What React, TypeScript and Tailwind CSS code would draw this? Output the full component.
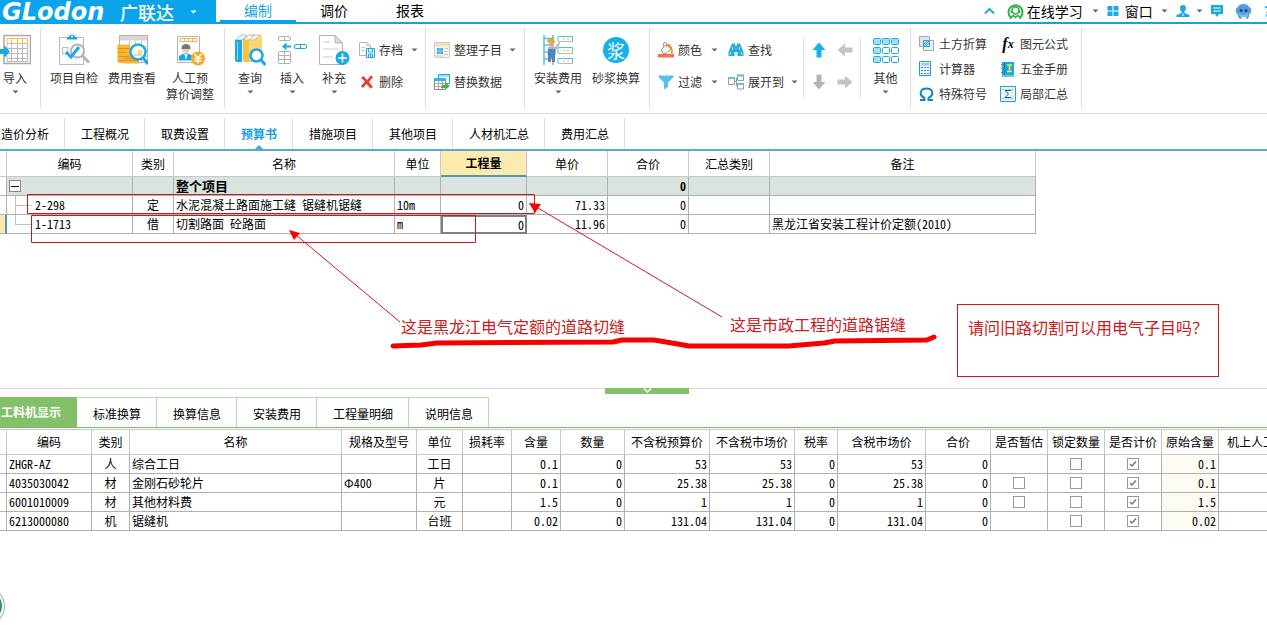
import type { ReactNode } from "react";

const BLUE = "#1ba9e6";
const GRAY = "#b4b4b4";

function Svg({ w = 16, h = 16, children }: { w?: number; h?: number; children: ReactNode }) {
  return (
    <svg className="block shrink-0" width={w} height={h} viewBox={`0 0 ${w} ${h}`} fill="none" aria-hidden="true">
      {children}
    </svg>
  );
}

function Caret({ color = "#666" }: { color?: string }) {
  return (
    <Svg w={7} h={4}>
      <path d="M0.5 0.5H6.5L3.5 3.5Z" fill={color} />
    </Svg>
  );
}

/* large ribbon icons */

function ImportIcon() {
  return (
    <Svg w={32} h={32}>
      <path d="M5 1.5H31.500V29.500H5Z" fill="#fff" stroke="#a9a9a9" strokeWidth="1.5" />
      <path d="M8 4.500H28.500V9.500H8Z" stroke="#f3bd55" />
      <path d="M12.500 4V10M18.500 4V10M23.500 4V10" stroke="#f3bd55" />
      <path d="M8 14.500H28.500M8 19.500H28.500M8 24.500H28.500M8 10V27.500H28.500V10M12.500 10V27M18.500 10V27M23.500 10V27" stroke="#b9b9b9" />
      <path d="M0 15H5V11L11 17.500L5 24V20H0Z" fill={BLUE} />
    </Svg>
  );
}

function CheckItemIcon() {
  return (
    <Svg w={32} h={32}>
      <path d="M1.500 3.500H25.500V30.500H1.500Z" fill="#fff" stroke="#b9b9b9" />
      <path d="M9 5.500V3H11A3 2.500 0 0 1 17 3H19V5.500Z" fill={BLUE} />
      <circle cx="14" cy="2.500" r="1" fill="#fff" />
      <path d="M4.500 13.500H10V20H4.500Z" stroke="#b9b9b9" />
      <circle cx="19.500" cy="17" r="6.500" fill="#fff" stroke="#b4b4b4" strokeWidth="2" />
      <path d="M24.500 22L31 28.500" stroke="#b4b4b4" strokeWidth="3" />
      <path d="M8 18L13 23L21 13" stroke={BLUE} strokeWidth="3" />
    </Svg>
  );
}

function FeeViewIcon() {
  return (
    <Svg w={32} h={32}>
      <path d="M3.500 1.500H31.500V28.500H3.500Z" fill="#fff" stroke="#b4b4b4" />
      <path d="M4 2H31V6.500H4Z" fill="#d6d6d6" />
      <path d="M13.500 7V28M19.500 7V28M25.500 7V28M4 12.500H31M4 17.500H31M4 22.500H31" stroke="#c6c6c6" />
      <path d="M1.500 10.500H14V28.500H1.500Z" fill="#fbb334" />
      <path d="M8 19H23V29.500H8Z" fill="#fbb334" />
      <path d="M1.500 14.500H13M1.500 18.500H11M1.500 22.500H14M2 26.500H22M8 24.500H21" stroke="#e5931a" />
      <circle cx="22" cy="18" r="7.500" fill="#fff" stroke={BLUE} strokeWidth="2.500" />
      <path d="M17 20H22V16H26V22H18Z" fill="#f9d79b" />
      <path d="M27 23.500L32 30" stroke={BLUE} strokeWidth="3" />
    </Svg>
  );
}

function LaborPriceIcon() {
  return (
    <Svg w={32} h={32}>
      <path d="M3.500 2.500H25.500V28.500H3.500Z" fill="#fff" stroke="#b4b4b4" />
      <path d="M6 4.500H23V7.500H6ZM10.500 4.500V7.500M14.500 4.500V7.500M18.500 4.500V7.500" stroke="#f0b650" />
      <circle cx="12" cy="15" r="3.800" fill="#e9c9a8" />
      <path d="M7.500 14A4.500 4 0 0 1 16.500 14V15H7.500Z" fill="#777" />
      <path d="M5 26.500V22Q12 16.500 19 22V26.500Z" fill={BLUE} />
      <path d="M10.500 20L12 26L13.500 20Z" fill="#fff" />
      <circle cx="24" cy="24.500" r="7" fill="#f9a825" />
      <path d="M20.500 20L24 24L27.500 20M24 24V29.500M20.500 24.500H27.500M20.500 27H27.500" stroke="#fff" strokeWidth="1.500" />
    </Svg>
  );
}

function QueryIcon() {
  return (
    <Svg w={32} h={32}>
      <path d="M1 6L7 1H13L8 6Z" fill="#e9f7fd" stroke="#9ccfe4" />
      <path d="M1 6H8V28H3Q1 28 1 26Z" fill={BLUE} />
      <path d="M3.500 8V26" stroke="#8fdcf8" />
      <path d="M9 6L15 1H21L15 6Z" fill="#fff" stroke="#b8b08f" />
      <path d="M9 6H15V28H11Q9 28 9 26Z" fill="#f2c243" />
      <path d="M15 6L21 1H28V24L22 28H15Z" fill="#fbd675" />
      <path d="M15 6L21 1H26L20 6Z" fill="#fff" stroke="#cdbd86" />
      <circle cx="22.500" cy="21.500" r="6" fill="#fff" stroke={BLUE} strokeWidth="2.500" />
      <path d="M27 26L31.500 31" stroke={BLUE} strokeWidth="3" />
    </Svg>
  );
}

function InsertIcon() {
  return (
    <Svg w={32} h={32}>
      <rect x="2.500" y="2.500" width="12" height="4" rx="1.500" stroke="#b0b0b0" />
      <path d="M8.500 2.500V6.500" stroke="#b0b0b0" />
      <rect x="2.500" y="17.500" width="12" height="12" rx="1.500" stroke="#b0b0b0" />
      <path d="M8.500 17.500V29.500M2.500 21.500H14.500M2.500 25.500H14.500" stroke="#b0b0b0" />
      <path d="M6 12.500L10.500 8.500V11.500H15V13.500H10.500V16.500Z" fill={BLUE} />
      <rect x="18.500" y="10.500" width="12" height="4" rx="1.500" stroke={BLUE} />
      <path d="M24.500 10.500V14.500" stroke={BLUE} />
    </Svg>
  );
}

function SupplementIcon() {
  return (
    <Svg w={32} h={32}>
      <path d="M1.500 1.500H17L24.500 9V30.500H1.500Z" fill="#fff" stroke="#b4b4b4" />
      <path d="M17 1.500V9H24.500Z" fill="#dcdcdc" stroke="#b4b4b4" />
      <path d="M5 8H12M5 15H20M5 23H15" stroke="#ccc" />
      <circle cx="24.500" cy="24" r="7" fill={BLUE} />
      <path d="M24.500 19.500V28.500M20 24H29" stroke="#fff" strokeWidth="1.500" />
    </Svg>
  );
}

function InstallFeeIcon() {
  return (
    <Svg w={32} h={32}>
      <path d="M2 1V31M11 1V31M2 4.500H11M2 11H11M2 18H11M2 25H11" stroke="#4cc3ea" strokeWidth="1.500" />
      <path d="M16 2.500H30.500V7.500H16ZM16 13.500H30.500V19.500H16ZM16 24.500H30.500V29.500H16Z" fill="#fff" stroke="#53bfe3" />
      <path d="M16 7.500H30.500M16 19.500H30.500M16 29.500H30.500" stroke="#bbb" />
      <path d="M21 5H23M25 5H27M21 16.500H23M25 16.500H27M21 27H23M25 27H27" stroke="#efb63d" />
      <path d="M5 8.500A4 4 0 0 1 13 8.500Z" fill="#f7a12c" />
      <circle cx="9" cy="10.500" r="2.500" fill="#dda97f" />
      <path d="M6 13H13L17 8L18.500 9L14 16V21H5Z" fill="#c2b5ae" />
      <path d="M6 15H13V24H6Z" fill="#4187cf" />
      <path d="M6 23H9V28H6ZM10 23H13V28H10Z" fill="#6f7d92" />
    </Svg>
  );
}

function MortarIcon() {
  return (
    <span className="flex h-8 items-center">
      <span className="flex size-[26px] items-center justify-center rounded-full bg-[#14b1ee] text-lg leading-none text-white">浆</span>
    </span>
  );
}

function OtherIcon() {
  const cells = [0, 1, 2, 3, 4, 5, 6, 7, 8];
  return (
    <Svg w={32} h={32}>
      {cells.map((i) => (
        <rect
          key={i}
          x={3.5 + (i % 3) * 9}
          y={4.5 + Math.floor(i / 3) * 9}
          width="7"
          height="6"
          rx="1"
          fill={i < 3 || i % 3 === 0 ? "#a9def5" : "#fff"}
          stroke={BLUE}
        />
      ))}
    </Svg>
  );
}

/* small ribbon icons */

function ArchiveIcon() {
  return (
    <Svg>
      <path d="M0.500 0.500H8L11.500 4V13.500H0.500Z" fill="#fff" stroke="#b4b4b4" />
      <path d="M8 0.500V4H11.500M2.500 5.500H6M2.500 8.500H6" stroke="#c4c4c4" />
      <path d="M7.500 6.500H15.500V15.500H7.500Z" fill="#fff" stroke={BLUE} />
      <path d="M9.500 7V10H13.500V7M9.500 15V12H13.500V15M11.500 12V15" stroke={BLUE} />
    </Svg>
  );
}

function DeleteIcon() {
  return (
    <Svg>
      <path d="M2 4L4.500 2L8 6L12 1.500L14 3L10 8L14 13L11.500 14.500L7.500 10L4 14L2 12L6 7.500Z" fill="#ec3b34" />
    </Svg>
  );
}

function ArrangeIcon() {
  return (
    <Svg>
      <path d="M0.500 0.500H15.500V15.500H0.500Z" fill="#f5f3ee" stroke="#ccc" />
      <path d="M1 1H15V4H1Z" fill="#f6e0b5" />
      <path d="M3 6H9V12H3Z" fill="#3badea" />
      <path d="M3 9H9M6 6V12" stroke="#8bd2f5" />
      <path d="M10.500 6.500H14M10.500 9.500H14M10.500 12.500H14M2 14H9" stroke="#c8c8c8" />
    </Svg>
  );
}

function ReplaceIcon() {
  return (
    <Svg>
      <path d="M4.500 0.500H15.500V9.500H4.500Z" fill="#fff" stroke="#2b9fd2" />
      <path d="M5 1H15V3H5Z" fill="#9fe0f4" />
      <path d="M0.500 4.500H11.500V15.500H0.500Z" fill="#fff" stroke="#888" />
      <path d="M0 4H12V7H0Z" fill="#35b3e2" />
      <path d="M4.500 7V15M8.500 7V15M1 9.500H11M1 12.500H11" stroke="#aaa" />
      <path d="M8 11H11V8.500L16 12L11 16V14H7Z" fill="#55ac3a" />
    </Svg>
  );
}

function ColorIcon() {
  return (
    <Svg>
      <path d="M3 8L8 2.500L13 7L8 11.500H5Z" fill="#f2f2f2" stroke="#999" />
      <path d="M5.500 6V2Q5.500 0.500 7 0.500T8.500 2V5" stroke="#999" />
      <path d="M9 2.500Q14 3 14 11.500" stroke="#ec9a35" strokeWidth="2" />
      <path d="M0 12H16V15.500H0Z" fill="#f4714f" />
    </Svg>
  );
}

function FilterIcon() {
  return (
    <Svg>
      <path d="M0.500 1.500H15.500V3L10 8.500V13L6 15.500V8.500L0.500 3Z" fill="#59bfee" />
    </Svg>
  );
}

function FindIcon() {
  return (
    <Svg>
      <path d="M4 1.500H7V4H9V1.500H12L15.500 10V14H9.500V10H6.500V14H0.500V10Z" fill="#23ace4" />
      <path d="M2.500 10V12.500M4.500 5V8M11.500 5V8M13.500 10V12.500M7.500 6H8.500" stroke="#c4ebfa" />
    </Svg>
  );
}

function ExpandIcon() {
  return (
    <Svg>
      <path d="M0.500 3.500H6.500V10.500H0.500ZM9.500 1H15.500V6.500H9.500ZM9.500 9.500H15.500V15H9.500Z" fill="#fff" stroke="#929ca4" />
      <path d="M0 3H7V5H0ZM9 0.500H16V2.500H9ZM9 9H16V11H9Z" fill="#68bde4" />
      <path d="M7 7.500H8.500V4H9.500M8.500 7.500V12H9.500" stroke="#999" />
    </Svg>
  );
}

function ArrowIcon({ angle, color }: { angle: number; color: string }) {
  return (
    <Svg>
      <path transform={`rotate(${angle} 8 8)`} d="M8 0.500L14.500 8H10.500V15.500H5.500V8H1.500Z" fill={color} />
    </Svg>
  );
}

function EarthworkIcon() {
  return (
    <Svg>
      <path d="M0.500 0.500H10.500V10.500H0.500Z" fill="#e3e3e3" stroke="#a8a8a8" />
      <path d="M4.500 4.500H14.500V14.500H4.500Z" fill="#ededed" stroke="#a8a8a8" />
      <path d="M4.500 4.500H10.500V10.500H4.500Z" fill="#b6e6fa" stroke="#2aaade" />
      <path d="M5 8L8 5M5 10L10 5M7 10L10 7" stroke="#2aaade" />
    </Svg>
  );
}

function CalculatorIcon() {
  return (
    <Svg>
      <path d="M0.500 0.500H11.500V14.500H0.500Z" fill="#e9f6fc" stroke="#3193c7" />
      <path d="M2 2H10V4.500H2Z" fill="#8ed0ee" />
      <path d="M2 6.500H10M2 9.500H10M2 12.500H10" stroke="#3193c7" strokeDasharray="2 1" />
      <path d="M8 6.500H10" stroke="#eb5c4f" />
    </Svg>
  );
}

function OmegaIcon() {
  return (
    <Svg>
      <path d="M1 14H5.500V12C-0.500 9 1 2.500 7.500 2.500S15.500 9 9.500 12V14H14" stroke="#1685c9" strokeWidth="2" />
    </Svg>
  );
}

function FormulaIcon() {
  return (
    <span className="flex size-4 items-center justify-center font-['Liberation_Serif',serif] text-base leading-none font-bold text-black italic">
      f<span className="text-xs">x</span>
    </span>
  );
}

function HandbookIcon() {
  return (
    <Svg>
      <path d="M2 1H14V14H2Z" fill="#14abe4" />
      <path d="M4.500 1V14M2 15H14" stroke="#0b7cb5" />
      <path d="M1 3.500H3M1 7.500H3M1 11.500H3" stroke="#777" />
      <path d="M7 4H12M9.500 4V10.500M7 10.500H12" stroke="#f4e64a" strokeWidth="1.500" />
    </Svg>
  );
}

function PartialSumIcon() {
  return (
    <Svg>
      <path d="M0.500 0.500H15.500V15.500H0.500Z" fill="#e4f4fb" stroke="#2ba0d2" />
      <path d="M2 3.500H14M2 12.500H14" stroke="#8ccbe5" strokeDasharray="2 1" />
      <path d="M11 5V4.500H5L8.500 8L5 11.500H11V11" stroke="#555" />
    </Svg>
  );
}

/* title bar icons */

function StudyIcon() {
  return (
    <Svg w={17} h={17}>
      <path d="M4 14.500A7 7 0 1 1 13 14.500" stroke="#2fae48" strokeWidth="2" />
      <circle cx="8.500" cy="7.500" r="3.500" stroke="#2fae48" strokeWidth="1.500" />
      <path d="M4.500 7.500V10M12.500 7.500V10M6 12L8.500 14.500L11 12M3 16L6 12.500M14 16L11 12.500" stroke="#2fae48" strokeWidth="1.500" />
    </Svg>
  );
}

function WindowsIcon() {
  return (
    <Svg w={12} h={12}>
      <path d="M0.500 1H5.500V5.500H0.500ZM6.500 1H11.500V5.500H6.500ZM0.500 6.500H5.500V11H0.500ZM6.500 6.500H11.500V11H6.500Z" fill={BLUE} />
    </Svg>
  );
}

function UserIcon() {
  return (
    <Svg w={14} h={14}>
      <path d="M7 1A3 3 0 0 1 10 4C10 6 9 7 8.500 7.500V9L13.500 11V13H0.500V11L5.500 9V7.500C5 7 4 6 4 4A3 3 0 0 1 7 1Z" fill={BLUE} />
      <path d="M7 9.500V12" stroke="#fff" />
    </Svg>
  );
}

function ChatIcon() {
  return (
    <Svg w={12} h={14}>
      <path d="M0 1H12V10H8L6 13L4 10H0Z" fill={BLUE} />
      <path d="M2.500 4H9.500M2.500 7H9.500" stroke="#fff" />
    </Svg>
  );
}

function MascotIcon() {
  return (
    <Svg w={17} h={17}>
      <path d="M3 4Q4 1 8.500 1T14 4Q17 5 16 9.500L14.500 11Q14 16 11.500 16L10.500 14H7L6 16Q3 16 2.500 11L1 9.500Q0 5 3 4Z" fill="#4f9fe0" />
      <path d="M4 10Q8.500 14 13 10L12 14H5Z" fill="#7fbdee" />
      <circle cx="6" cy="7.500" r="1.500" fill="#1f4063" />
      <circle cx="11" cy="7.500" r="1.500" fill="#1f4063" />
    </Svg>
  );
}

function TitleBar() {
  return (
    <header className="flex h-6 shrink-0">
      <div className="flex w-[216px] shrink-0 items-center bg-[#0aa4ea] pl-0.5 text-white">
        <span className="w-[118px] font-['DejaVu_Sans',sans-serif] text-2xl leading-6 font-bold italic">GLodon</span>
        <span className="text-lg leading-6 font-medium">广联达</span>
        <button className="ml-4" aria-label="主菜单">
          <Caret color="#fff" />
        </button>
      </div>
      <div className="flex grow border-b-2 border-[#1a9fd6] pl-1">
        <nav className="flex h-6 text-sm leading-5 text-black">
          <button className="w-19 border-b-4 border-[#0aa4ea] text-[#1b9fe0]">编制</button>
          <button className="w-19 border-b-4 border-transparent">调价</button>
          <button className="w-19 border-b-4 border-transparent">报表</button>
        </nav>
        <div className="-mr-1 ml-auto flex h-[22px] items-center text-sm leading-5 text-black">
          <button className="mr-3" aria-label="收起">
            <Svg w={11} h={6}>
              <path d="M1 5.500L5.500 1L10 5.500" stroke={BLUE} strokeWidth="2" />
            </Svg>
          </button>
          <button className="mr-2 flex items-center gap-[3px]">
            <StudyIcon />
            在线学习
            <span className="ml-1.5">
              <Caret />
            </span>
          </button>
          <button className="mr-2 flex items-center gap-1">
            <WindowsIcon />
            <span className="ml-0.5">窗口</span>
            <span className="ml-1">
              <Caret />
            </span>
          </button>
          <button className="mr-2 flex items-center gap-1.5" aria-label="用户">
            <UserIcon />
            <Caret />
          </button>
          <button className="mr-3" aria-label="消息">
            <ChatIcon />
          </button>
          <button className="mr-3" aria-label="助手">
            <MascotIcon />
          </button>
          <button className="font-bold text-[#1ba9e6]">?</button>
        </div>
      </div>
    </header>
  );
}

function Divider() {
  return <div className="mt-1 h-20 w-px shrink-0 bg-[#dedede]" />;
}

function ShortDivider() {
  return <div className="mt-3.5 h-15 w-px shrink-0 bg-[#dedede]" />;
}

function BigButton({ icon, lines, width = "w-[58px]", caret }: { icon: ReactNode; lines: string[]; width?: string; caret?: boolean }) {
  return (
    <button className={`flex shrink-0 flex-col items-center pt-2.5 ${width}`}>
      {icon}
      <span className="mt-1 flex flex-col leading-4 whitespace-nowrap">
        {lines.map((line) => (
          <span key={line}>{line}</span>
        ))}
      </span>
      {caret && (
        <span className="mt-1">
          <Caret />
        </span>
      )}
    </button>
  );
}

function SmallButton({ icon, label, caret }: { icon: ReactNode; label: string; caret?: boolean }) {
  return (
    <button className="flex h-8 w-full items-center gap-1 whitespace-nowrap">
      {icon}
      {label}
      {caret && (
        <span className="ml-auto">
          <Caret />
        </span>
      )}
    </button>
  );
}

function ToolItem({ icon, label }: { icon: ReactNode; label: string }) {
  return (
    <button className="flex h-[25px] items-center gap-1 whitespace-nowrap">
      {icon}
      {label}
    </button>
  );
}

function Ribbon() {
  return (
    <div className="flex h-[90px] shrink-0 items-start overflow-hidden border-b border-[#dedede] text-[#333]">
      <div className="flex w-10 shrink-0">
        <BigButton icon={<ImportIcon />} lines={["导入"]} width="w-[30px]" caret />
      </div>
      <Divider />
      <div className="flex w-[183px] shrink-0 px-1">
        <BigButton icon={<CheckItemIcon />} lines={["项目自检"]} />
        <BigButton icon={<FeeViewIcon />} lines={["费用查看"]} />
        <BigButton icon={<LaborPriceIcon />} lines={["人工预", "算价调整"]} />
      </div>
      <Divider />
      <div className="flex w-[200px] shrink-0 pl-1">
        <BigButton icon={<QueryIcon />} lines={["查询"]} width="w-[42px]" caret />
        <BigButton icon={<InsertIcon />} lines={["插入"]} width="w-[42px]" caret />
        <BigButton icon={<SupplementIcon />} lines={["补充"]} width="w-[42px]" caret />
        <div className="ml-1 w-[59px] pt-2.5">
          <SmallButton icon={<ArchiveIcon />} label="存档" caret />
          <SmallButton icon={<DeleteIcon />} label="删除" />
        </div>
      </div>
      <Divider />
      <div className="w-[98px] shrink-0 px-2 pt-2.5">
        <SmallButton icon={<ArrangeIcon />} label="整理子目" caret />
        <SmallButton icon={<ReplaceIcon />} label="替换数据" />
      </div>
      <Divider />
      <div className="flex w-[124px] shrink-0 pl-1">
        <BigButton icon={<InstallFeeIcon />} lines={["安装费用"]} caret />
        <BigButton icon={<MortarIcon />} lines={["砂浆换算"]} />
      </div>
      <Divider />
      <div className="flex w-[153px] shrink-0 gap-2.5 pt-2.5 pl-2">
        <div className="w-15">
          <SmallButton icon={<ColorIcon />} label="颜色" caret />
          <SmallButton icon={<FilterIcon />} label="过滤" caret />
        </div>
        <div className="w-[70px]">
          <SmallButton icon={<FindIcon />} label="查找" />
          <SmallButton icon={<ExpandIcon />} label="展开到" caret />
        </div>
      </div>
      <ShortDivider />
      <div className="grid w-14 shrink-0 grid-cols-2 gap-x-2.5 px-[7px] pt-2.5">
        <button className="flex h-8 items-center" aria-label="上移"><ArrowIcon angle={0} color="#14b1ee" /></button>
        <button className="flex h-8 items-center" aria-label="升级"><ArrowIcon angle={-90} color="#c4c4c4" /></button>
        <button className="flex h-8 items-center" aria-label="下移"><ArrowIcon angle={180} color={GRAY} /></button>
        <button className="flex h-8 items-center" aria-label="降级"><ArrowIcon angle={90} color="#c4c4c4" /></button>
      </div>
      <ShortDivider />
      <BigButton icon={<OtherIcon />} lines={["其他"]} width="w-[49px]" caret />
      <Divider />
      <div className="grid w-[170px] shrink-0 grid-cols-[81px_1fr] pt-[7px] pl-2">
        <ToolItem icon={<EarthworkIcon />} label="土方折算" />
        <ToolItem icon={<FormulaIcon />} label="图元公式" />
        <ToolItem icon={<CalculatorIcon />} label="计算器" />
        <ToolItem icon={<HandbookIcon />} label="五金手册" />
        <ToolItem icon={<OmegaIcon />} label="特殊符号" />
        <ToolItem icon={<PartialSumIcon />} label="局部汇总" />
      </div>
      <Divider />
    </div>
  );
}

const pageTabs = ["造价分析", "工程概况", "取费设置", "预算书", "措施项目", "其他项目", "人材机汇总", "费用汇总"];

function PageTabs() {
  return (
    <nav className="flex h-[37px] shrink-0 overflow-hidden border-b-2 border-[#5ba9cc] pt-1">
      <div className="-ml-[15px] flex">
        {pageTabs.map((tab) =>
          tab === "预算书" ? (
            <button key={tab} className="relative border-r border-[#dedede] pr-[15px] pl-4 font-bold whitespace-nowrap text-[#1b9fe0]">
              {tab}
              <span className="absolute inset-x-0 bottom-0 flex justify-center">
                <Svg w={8} h={4}>
                  <path d="M0 4L4 0L8 4Z" fill="#45abd6" />
                </Svg>
              </span>
            </button>
          ) : (
            <button key={tab} className="border-r border-[#dedede] pr-[15px] pl-4 whitespace-nowrap">
              {tab}
            </button>
          ),
        )}
      </div>
    </nav>
  );
}

const cell = "h-[19px] border-r border-b border-[#b0b0b0] px-0.5 leading-[18px]";
const headCell = "h-[26px] border-r border-b border-[#c8c8c8] font-normal leading-6";

const budgetColumns = [7, 126, 41, 221, 46, 86, 81, 81, 81, 266];
const budgetHeads = ["", "编码", "类别", "名称", "单位", "工程量", "单价", "合价", "汇总类别", "备注"];

function BudgetTable() {
  return (
    <table className="w-[1036px] table-fixed border-separate border-spacing-0">
      <colgroup>
        {budgetColumns.map((w, i) => (
          <col key={i} style={{ width: w }} />
        ))}
      </colgroup>
      <thead>
        <tr>
          {budgetHeads.map((head) =>
            head === "工程量" ? (
              <th key={head} className="h-[26px] border-r border-b-2 border-r-[#c8c8c8] border-b-[#4a9bb5] bg-[#fdebae] leading-6 font-bold">
                {head}
              </th>
            ) : (
              <th key={head} className={headCell}>
                {head}
              </th>
            ),
          )}
        </tr>
      </thead>
      <tbody>
        <tr className="bg-[#dae3de] font-bold">
          <td className="h-[19px] border-r border-b border-[#b0b0b0] bg-white" />
          <td className={cell}>
            <button className="flex size-3 items-center justify-center border border-[#888] bg-white" aria-label="折叠">
              <span className="h-px w-2 bg-black" />
            </button>
          </td>
          <td className={cell} />
          <td className={`${cell} text-[13px]`}>整个项目</td>
          <td className={cell} />
          <td className={cell} />
          <td className={cell} />
          <td className={`${cell} text-right`}>0</td>
          <td className={cell} />
          <td className={cell} />
        </tr>
        <tr>
          <td className={cell} />
          <td className={cell}>
            <div className="flex h-[18px] items-center pl-1.5">
              <span className="h-[18px] border-l border-[#c0c0c0]" />
              <span className="mr-[3px] h-px w-4 bg-[#c0c0c0]" />
              2-298
            </div>
          </td>
          <td className={`${cell} text-center`}>定</td>
          <td className={cell}>水泥混凝土路面施工缝 锯缝机锯缝</td>
          <td className={cell}>10m</td>
          <td className={`${cell} text-right`}>0</td>
          <td className={`${cell} text-right`}>71.33</td>
          <td className={`${cell} text-right`}>0</td>
          <td className={cell} />
          <td className={cell} />
        </tr>
        <tr>
          <td className="h-[19px] border-r-2 border-b border-r-[#4a9bb5] border-b-[#b0b0b0] bg-[#fdebae]" />
          <td className={cell}>
            <div className="flex h-[18px] items-center pl-1.5">
              <span className="h-2.5 self-start border-l border-[#c0c0c0]" />
              <span className="mr-[3px] h-px w-4 bg-[#c0c0c0]" />
              1-1713
            </div>
          </td>
          <td className={`${cell} text-center`}>借</td>
          <td className={cell}>切割路面 砼路面</td>
          <td className={cell}>m</td>
          <td className="h-[19px] border-2 border-[#808080] px-px text-right leading-[15px]">0</td>
          <td className={`${cell} text-right`}>11.96</td>
          <td className={`${cell} text-right`}>0</td>
          <td className={cell} />
          <td className={cell}>黑龙江省安装工程计价定额(2010)</td>
        </tr>
      </tbody>
    </table>
  );
}

/* red review marks drawn over the budget table */
function ReviewMarks() {
  return (
    <div className="text-base leading-6 whitespace-nowrap text-[#c8201e]">
      <svg className="pointer-events-none absolute top-0 left-0" width="960" height="237" viewBox="0 151 960 237" fill="none" aria-hidden="true">
        <path d="M27.500 194.500H534.500V213.500H27.500Z" stroke="#d01818" />
        <path d="M31.500 215.500H475.500V242.500H31.500Z" stroke="#d01818" />
        <path d="M400 322L296 235M722 317L538 208" stroke="#d01818" />
        <path d="M289 230L300 233L294 240Z" fill="#f00" />
        <path d="M529 203L541 204L535 213Z" fill="#f00" />
        <path
          d="M393 346L421 345L437 343L613 342L622 340H654L672 343L689 346H789L824 343L835 341L927 340L934 337"
          stroke="#f80000"
          strokeWidth="5"
          strokeLinecap="round"
          strokeLinejoin="round"
        />
      </svg>
      <p className="absolute top-[163px] left-[401px]">这是黑龙江电气定额的道路切缝</p>
      <p className="absolute top-[161px] left-[730px]">这是市政工程的道路锯缝</p>
      <p className="absolute top-[153px] left-[957px] h-[73px] w-[262px] border border-[#d01818] px-2.5 pt-2.5">请问旧路切割可以用电气子目吗？</p>
    </div>
  );
}

function Splitter() {
  return (
    <div className="flex h-[9px] shrink-0 items-start border-t border-[#dedede]">
      <button className="-mt-px ml-[605px] flex h-1.5 w-21 items-start justify-center bg-[#82c168]" aria-label="收起明细">
        <Svg w={9} h={5}>
          <path d="M1 0.500L4.500 4L8 0.500" stroke="#fff" strokeWidth="1.500" />
        </Svg>
      </button>
    </div>
  );
}

const detailTabs = ["标准换算", "换算信息", "安装费用", "工程量明细", "说明信息"];

function DetailTabs() {
  return (
    <nav className="flex h-[31px] shrink-0 overflow-hidden border-b border-[#7cba6a]">
      <button className="w-[77px] bg-[#82c168] pr-4 text-right font-bold whitespace-nowrap text-white">工料机显示</button>
      {detailTabs.map((tab) => (
        <button key={tab} className="border-t border-r border-[#b5dba6] pt-0.5 pr-[15px] pl-4 whitespace-nowrap">
          {tab}
        </button>
      ))}
    </nav>
  );
}

const detailColumns = [7, 85, 38, 212, 75, 46, 49, 49, 64, 85, 85, 43, 88, 65, 57, 57, 57, 57, 77];
const detailHeads = [
  "", "编码", "类别", "名称", "规格及型号", "单位", "损耗率", "含量", "数量", "不含税预算价", "不含税市场价",
  "税率", "含税市场价", "合价", "是否暂估", "锁定数量", "是否计价", "原始含量",
];

const resources = [
  { code: "ZHGR-AZ", kind: "人", name: "综合工日", spec: "", unit: "工日", content: "0.1", price: "53", estimate: false },
  { code: "4035030042", kind: "材", name: "金刚石砂轮片", spec: "Φ400", unit: "片", content: "0.1", price: "25.38", estimate: true },
  { code: "6001010009", kind: "材", name: "其他材料费", spec: "", unit: "元", content: "1.5", price: "1", estimate: true },
  { code: "6213000080", kind: "机", name: "锯缝机", spec: "", unit: "台班", content: "0.02", price: "131.04", estimate: false },
];

function Tick({ label, checked }: { label: string; checked?: boolean }) {
  return (
    <span className="mx-auto grid size-3">
      <input
        type="checkbox"
        aria-label={label}
        defaultChecked={checked}
        className="peer col-start-1 row-start-1 size-3 appearance-none border border-[#999] bg-white"
      />
      <svg className="pointer-events-none invisible col-start-1 row-start-1 size-3 peer-checked:visible" viewBox="0 0 12 12" fill="none">
        <path d="M3 6L5 8L9 3.500" stroke="#777" strokeWidth="1.500" />
      </svg>
    </span>
  );
}

function DetailTable() {
  return (
    <div className="mt-px overflow-hidden border-t border-[#c8c8c8]">
      <table className="w-[1296px] table-fixed border-separate border-spacing-0">
        <colgroup>
          {detailColumns.map((w, i) => (
            <col key={i} style={{ width: w }} />
          ))}
        </colgroup>
        <thead>
          <tr>
            {detailHeads.map((head) => (
              <th key={head} className="h-[25px] border-r border-b border-[#c8c8c8] leading-6 font-normal whitespace-nowrap">
                {head}
              </th>
            ))}
            <th className="border-b border-[#c8c8c8] pl-2 text-left leading-6 font-normal whitespace-nowrap">机上人工</th>
          </tr>
        </thead>
        <tbody>
          {resources.map((r) => (
            <tr key={r.code}>
              <td className={cell} />
              <td className={cell}>{r.code}</td>
              <td className={`${cell} text-center`}>{r.kind}</td>
              <td className={cell}>{r.name}</td>
              <td className={cell}>{r.spec}</td>
              <td className={`${cell} text-center`}>{r.unit}</td>
              <td className={cell} />
              <td className={`${cell} text-right`}>{r.content}</td>
              <td className={`${cell} text-right`}>0</td>
              <td className={`${cell} text-right`}>{r.price}</td>
              <td className={`${cell} text-right`}>{r.price}</td>
              <td className={`${cell} text-right`}>0</td>
              <td className={`${cell} text-right`}>{r.price}</td>
              <td className={`${cell} text-right`}>0</td>
              <td className={cell}>{r.estimate && <Tick label={`${r.name} 是否暂估`} />}</td>
              <td className={cell}>
                <Tick label={`${r.name} 锁定数量`} />
              </td>
              <td className={cell}>
                <Tick label={`${r.name} 是否计价`} checked />
              </td>
              <td className={`${cell} bg-[#fdf9f3] text-right`}>{r.content}</td>
              <td className={cell} />
            </tr>
          ))}
        </tbody>
      </table>
    </div>
  );
}

export default function App() {
  return (
    <div className="relative flex min-h-screen flex-col overflow-hidden bg-white font-['Noto_Sans_CJK_SC',sans-serif] text-xs text-black">
      <TitleBar />
      <Ribbon />
      <PageTabs />
      <main className="relative h-[237px] shrink-0 [font-feature-settings:'hwid']">
        <BudgetTable />
        <ReviewMarks />
      </main>
      <Splitter />
      <section className="[font-feature-settings:'hwid']">
        <DetailTabs />
        <DetailTable />
      </section>
      <div className="absolute bottom-5 -left-8 size-9 rounded-full border-2 border-white bg-[#1f9d55] shadow-md ring-1 ring-[#aaa]" />
    </div>
  );
}
